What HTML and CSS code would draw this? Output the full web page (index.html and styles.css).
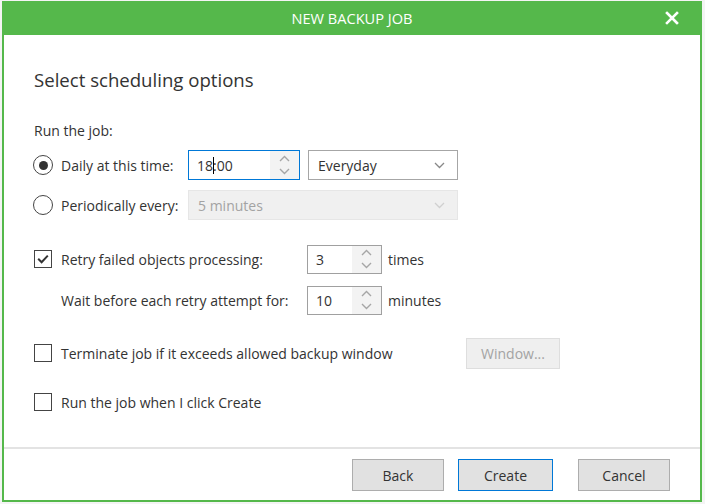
FILE: index.html
```html
<!DOCTYPE html>
<html>
<head>
<meta charset="utf-8">
<link rel="stylesheet" href="styles.css">
</head>
<body>
<div class="window">
  <div class="titlebar">
    <span class="title">NEW BACKUP JOB</span>
    <svg class="close" width="14" height="14" viewBox="0 0 14 14"><path d="M2 2 L12 12 M12 2 L2 12" stroke="#fff" stroke-width="2.6" stroke-linecap="square"/></svg>
  </div>
  <div class="content">
    <h1 class="heading">Select scheduling options</h1>
    <div class="section-label">Run the job:</div>

    <div class="row row-daily">
      <span class="radio checked"><span class="dot"></span></span>
      <span class="label label-radio">Daily at this time:</span>
      <div class="spin spin-time focused">
        <span class="spin-text">18<span class="caret"></span>:00</span>
        <span class="spin-btns">
          <svg width="11" height="7" viewBox="0 0 11 7"><path d="M1 6 L5.5 1.5 L10 6" fill="none" stroke="#a6a6a6" stroke-width="1.4"/></svg>
          <svg width="11" height="7" viewBox="0 0 11 7"><path d="M1 1 L5.5 5.5 L10 1" fill="none" stroke="#a6a6a6" stroke-width="1.4"/></svg>
        </span>
      </div>
      <div class="select select-day">
        <span class="select-text">Everyday</span>
        <svg class="chev" width="11" height="7" viewBox="0 0 11 7"><path d="M1 1 L5.5 5.5 L10 1" fill="none" stroke="#888" stroke-width="1.3"/></svg>
      </div>
    </div>

    <div class="row row-period">
      <span class="radio"></span>
      <span class="label label-radio">Periodically every:</span>
      <div class="select select-period disabled">
        <span class="select-text">5 minutes</span>
        <svg class="chev" width="11" height="7" viewBox="0 0 11 7"><path d="M1 1 L5.5 5.5 L10 1" fill="none" stroke="#d0d0d0" stroke-width="1.3"/></svg>
      </div>
    </div>

    <div class="row row-retry">
      <span class="check checked"><svg width="14" height="14" viewBox="0 0 14 14"><path d="M2.2 6.8 L5.6 10.2 L11.8 3.6" fill="none" stroke="#333" stroke-width="2"/></svg></span>
      <span class="label label-num">Retry failed objects processing:</span>
      <div class="spin spin-num">
        <span class="spin-text">3</span>
        <span class="spin-btns">
          <svg width="11" height="7" viewBox="0 0 11 7"><path d="M1 6 L5.5 1.5 L10 6" fill="none" stroke="#a6a6a6" stroke-width="1.4"/></svg>
          <svg width="11" height="7" viewBox="0 0 11 7"><path d="M1 1 L5.5 5.5 L10 1" fill="none" stroke="#a6a6a6" stroke-width="1.4"/></svg>
        </span>
      </div>
      <span class="unit">times</span>
    </div>

    <div class="row row-wait">
      <span class="label label-num">Wait before each retry attempt for:</span>
      <div class="spin spin-num">
        <span class="spin-text">10</span>
        <span class="spin-btns">
          <svg width="11" height="7" viewBox="0 0 11 7"><path d="M1 6 L5.5 1.5 L10 6" fill="none" stroke="#a6a6a6" stroke-width="1.4"/></svg>
          <svg width="11" height="7" viewBox="0 0 11 7"><path d="M1 1 L5.5 5.5 L10 1" fill="none" stroke="#a6a6a6" stroke-width="1.4"/></svg>
        </span>
      </div>
      <span class="unit">minutes</span>
    </div>

    <div class="row row-terminate">
      <span class="check"></span>
      <span class="label label-term">Terminate job if it exceeds allowed backup window</span>
      <button class="btn btn-disabled">Window...</button>
    </div>

    <div class="row row-run">
      <span class="check"></span>
      <span class="label">Run the job when I click Create</span>
    </div>
  </div>
  <div class="footer">
    <button class="btn">Back</button>
    <button class="btn btn-default">Create</button>
    <button class="btn btn-cancel">Cancel</button>
  </div>
</div>
</body>
</html>
```
FILE: styles.css
```css
html, body {
  margin: 0;
  padding: 0;
}
body {
  background: #f4f4f4;
  font-family: "Open Sans", "Noto Sans", sans-serif;
  font-size: 14px;
  color: #333;
}
.window {
  margin: 1px 0 0 2px;
  width: 700px;
  height: 501px;
  box-sizing: border-box;
  border: 2px solid #55b84b;
  border-top: 0;
  background: #fff;
  display: flex;
  flex-direction: column;
}
.titlebar {
  height: 34px;
  margin: 0 -2px;
  background: #55b84b;
  display: flex;
  align-items: center;
  justify-content: center;
  position: relative;
  flex: none;
}
.title {
  color: #fff;
  font-size: 14.6px;
}
.close {
  position: absolute;
  right: 23px;
  top: 10px;
}
.content {
  flex: 1;
  padding-left: 30px;
  display: flex;
  flex-direction: column;
}
.heading {
  margin: 32px 0 0 0;
  font-size: 18.6px;
  line-height: 26px;
  font-weight: normal;
  color: #333;
}
.section-label {
  margin-top: 28px;
  line-height: 20px;
}
.row {
  display: flex;
  align-items: center;
  height: 30px;
}
.row-daily { margin-top: 9px; }
.row-period { margin-top: 10px; }
.row-retry { margin-top: 24px; }
.row-wait { margin-top: 11px; padding-left: 27px; }
.row-terminate { margin-top: 23px; }
.row-run { margin-top: 19px; }

.radio {
  width: 20px;
  height: 20px;
  box-sizing: border-box;
  border: 1px solid #444;
  border-radius: 50%;
  display: flex;
  align-items: center;
  justify-content: center;
  margin: 0 8px 0 -1px;
  flex: none;
}
.radio .dot {
  width: 9px;
  height: 9px;
  border-radius: 50%;
  background: #333;
}
.check {
  width: 18px;
  height: 18px;
  box-sizing: border-box;
  border: 1px solid #444;
  display: flex;
  align-items: center;
  justify-content: center;
  margin-right: 9px;
  flex: none;
}
.label { white-space: nowrap; }
.label-radio { width: 127px; flex: none; }
.label-num { width: 246px; flex: none; }
.label-term { width: 405px; flex: none; }

.spin {
  box-sizing: border-box;
  height: 30px;
  border: 1px solid #a0a0a0;
  display: flex;
  background: #fff;
}
.spin.focused { border-color: #0078d7; }
.spin-time { width: 112px; }
.spin-num { width: 75px; height: 29px; }
.spin-text {
  flex: 1;
  padding-left: 8px;
  display: flex;
  align-items: center;
}
.caret {
  display: inline-block;
  width: 1px;
  height: 17px;
  background: #000;
  margin-right: -1px;
}
.spin-btns {
  width: 29px;
  background: #f3f3f3;
  display: flex;
  flex-direction: column;
  align-items: center;
  justify-content: center;
  gap: 6px;
}
.select {
  box-sizing: border-box;
  height: 30px;
  border: 1px solid #a6a6a6;
  display: flex;
  align-items: center;
  padding: 0 12px 0 9px;
}
.select-text { flex: 1; }
.select-day { width: 150px; margin-left: 8px; }
.select-period { width: 270px; }
.select.disabled {
  background: #f0f0f0;
  border-color: #e6e6e6;
  color: #a3a3a3;
}
.unit { margin-left: 6px; }

.btn {
  font-family: inherit;
  font-size: 14px;
  color: #333;
  background: #e1e1e1;
  border: 1px solid #adadad;
  height: 32px;
  box-sizing: border-box;
  padding: 0;
  width: 92px;
}
.btn-disabled {
  width: 94px;
  height: 31px;
  background: #efefef;
  border-color: #dedede;
  color: #a3a3a3;
}
.btn-default {
  border-color: #0078d7;
  width: 95px;
}
.footer {
  height: 53px;
  border-top: 2px solid #e3e3e3;
  display: flex;
  align-items: flex-start;
  padding: 10px 0 0 348px;
  gap: 14px;
  box-sizing: border-box;
  flex: none;
}
.btn-cancel { margin-left: 11px; }
```
